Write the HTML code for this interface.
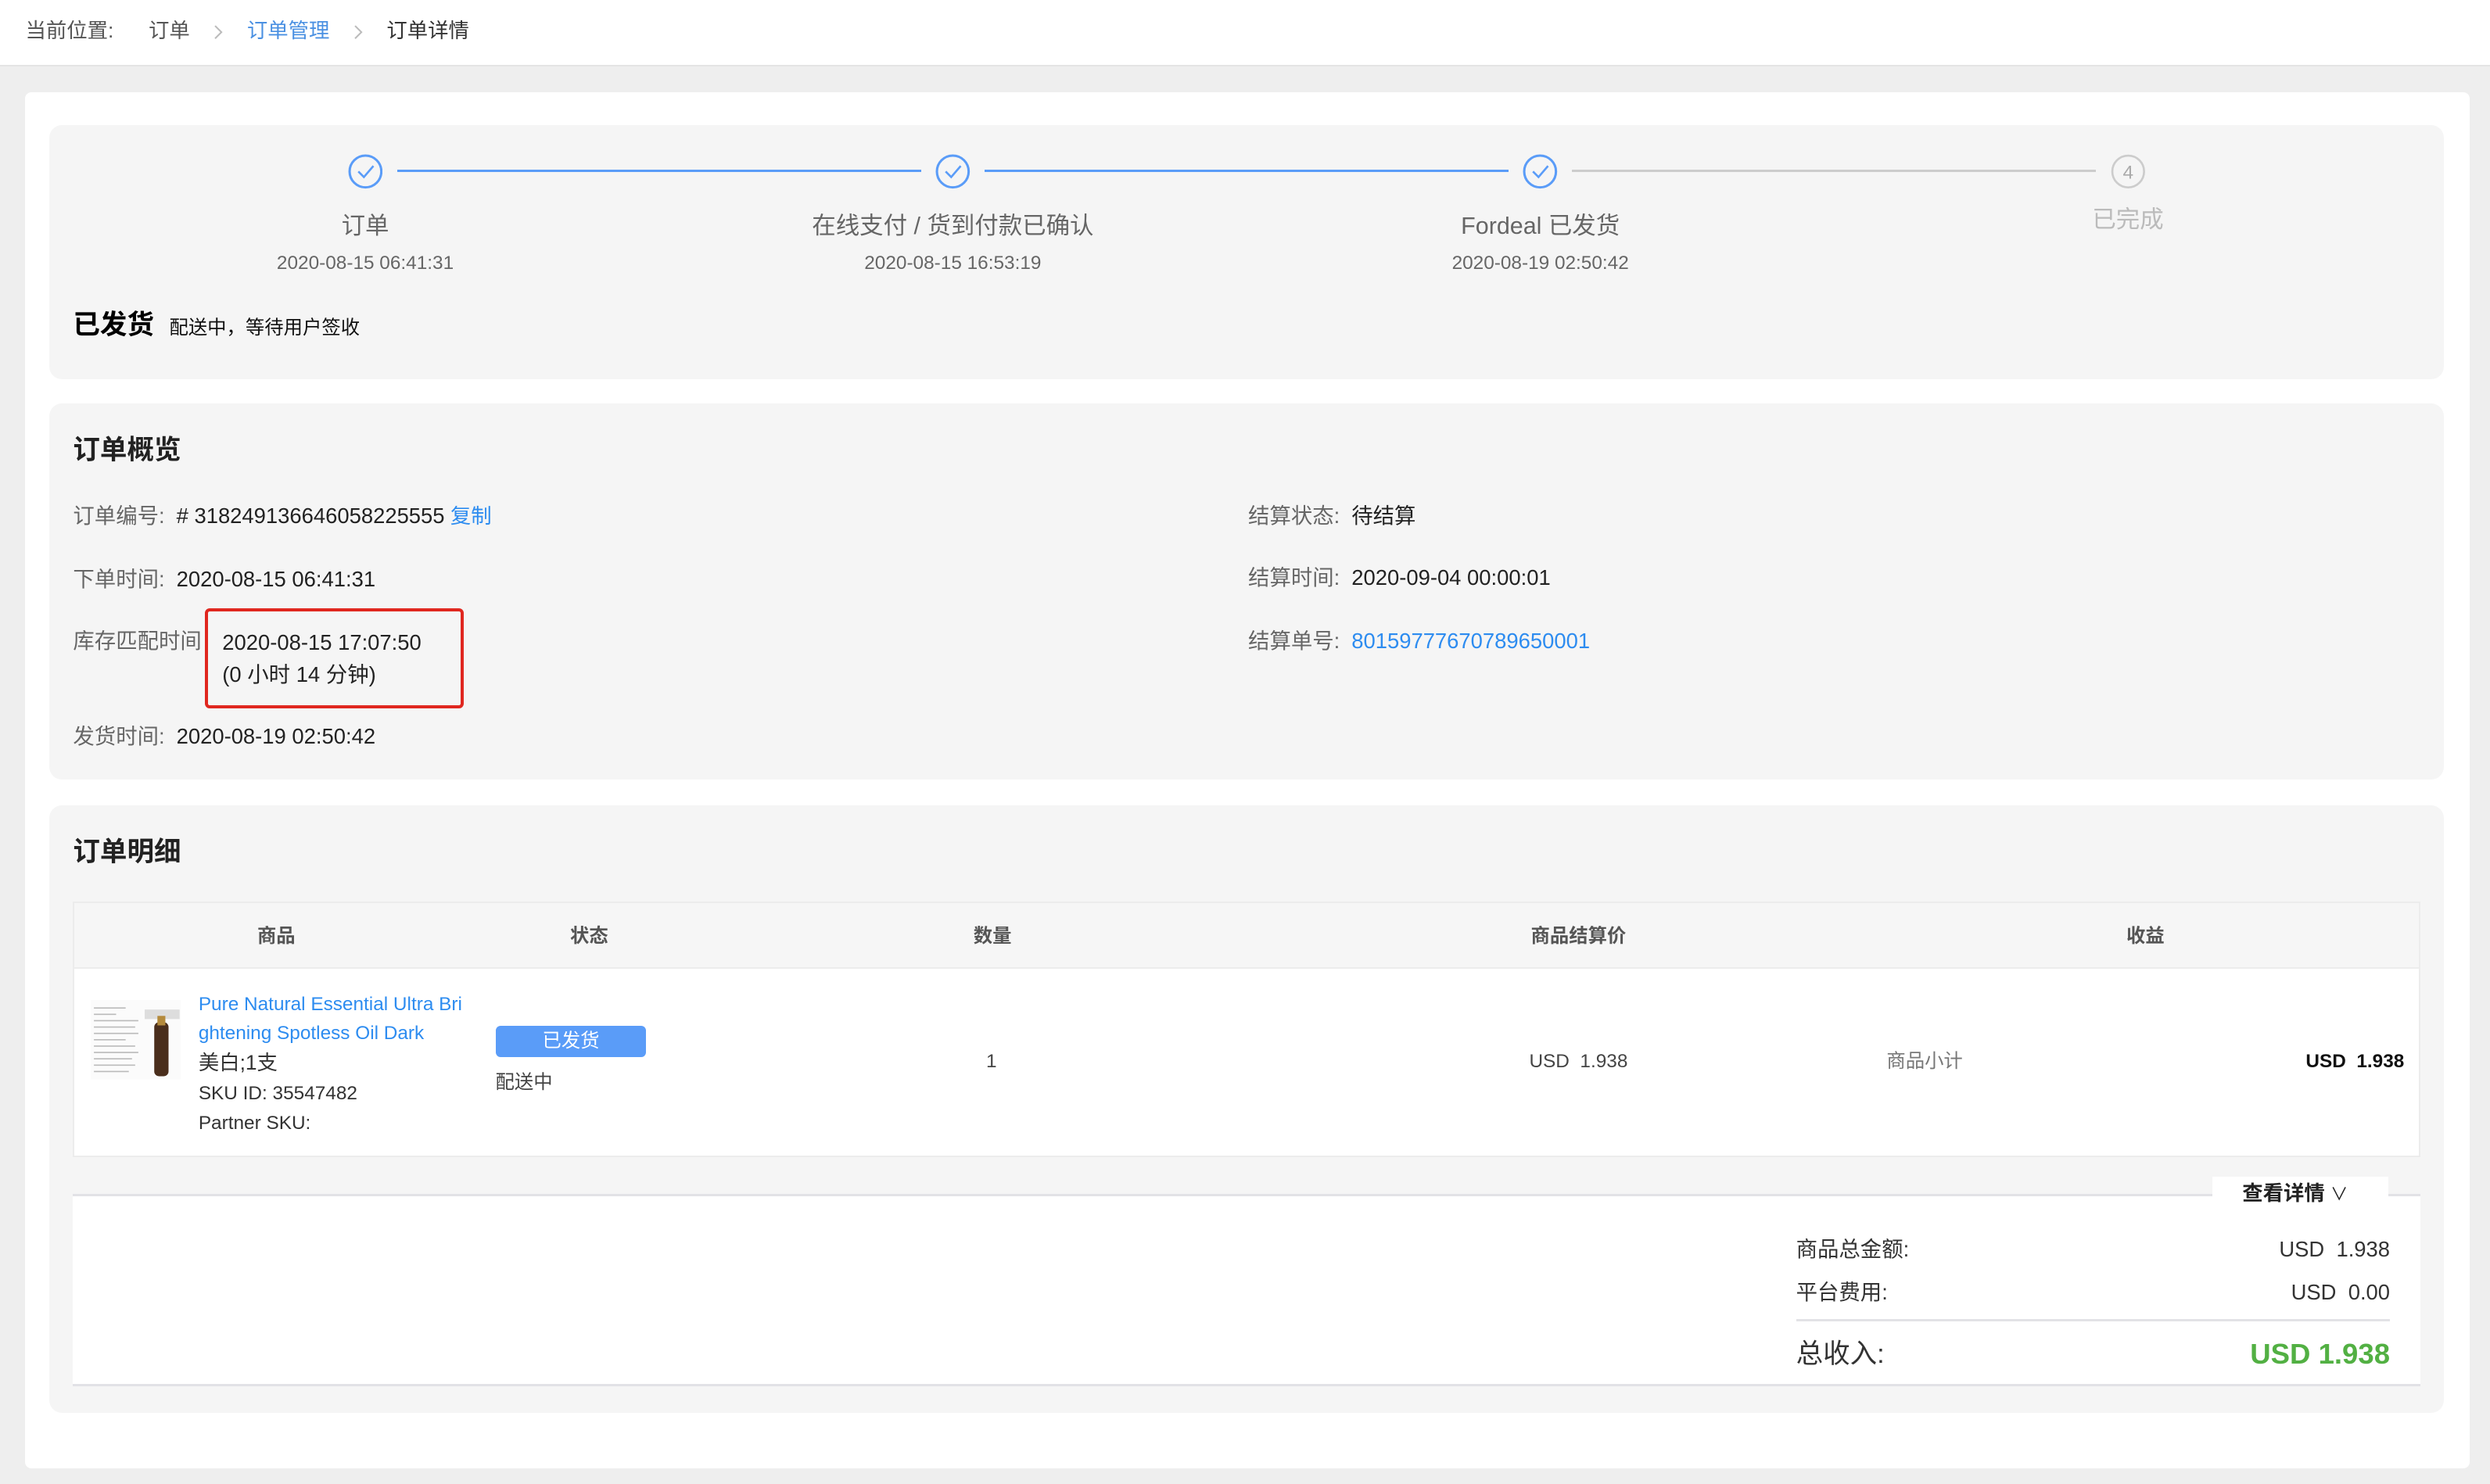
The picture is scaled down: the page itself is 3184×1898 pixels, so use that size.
<!DOCTYPE html>
<html><head><meta charset="utf-8"><style>
*{margin:0;padding:0;box-sizing:border-box}
html,body{width:3184px;height:1898px;overflow:hidden;background:#eeeeee}
#z{zoom:2.0306;width:1568px;height:935px;position:relative;font-family:"Liberation Sans","Noto Sans CJK SC",sans-serif;color:#333;font-size:13px;line-height:1.3}
.a{position:absolute;white-space:nowrap}
.hdr{left:0;top:0;width:1568px;height:42px;background:#fff;border-bottom:1px solid #e4e4e4}
.card{left:16px;top:58px;width:1539px;height:867px;background:#fff;border-radius:4px}
.p{background:#f5f5f5;border-radius:8px}
.ln{height:1.5px;background:#5a9cf8}
.lab{font-size:15px;color:#666;transform:translateX(-50%)}
.dt{font-size:12px;color:#666;transform:translateX(-50%)}
.t{font-size:17px;font-weight:bold;color:#222}
.k{color:#666;font-size:13.5px}
.v{color:#222;font-size:13.5px}
.th{font-size:12px;color:#555;font-weight:bold;transform:translateX(-50%)}
.sep{display:inline-block;margin:0 15px;vertical-align:middle}
</style></head><body><div id="z">
<div class="a hdr"></div>
<div class="a" style="left:16px;top:11px;font-size:13px;color:#555">当前位置:<span style="display:inline-block;width:22px"></span>订单<svg class="sep" width="6" height="10"><path d="M1 1l4 4-4 4" fill="none" stroke="#bbb" stroke-width="1"/></svg><span style="color:#4a90e2">订单管理</span><svg class="sep" width="6" height="10"><path d="M1 1l4 4-4 4" fill="none" stroke="#bbb" stroke-width="1"/></svg><span style="color:#333">订单详情</span></div>
<div class="a card"></div>
<div class="a p" style="left:31px;top:79px;width:1508px;height:160px"></div>
<div class="a ln" style="left:250px;top:107px;width:330px"></div>
<div class="a ln" style="left:620px;top:107px;width:330px"></div>
<div class="a ln" style="left:990px;top:107px;width:330px;background:#ccc"></div>
<svg class="a" style="left:219px;top:97px" width="22" height="22"><circle cx="11" cy="11" r="10" fill="none" stroke="#5a9cf8" stroke-width="1.5"/><path d="M6.5 11l3.5 3.5 6-7" fill="none" stroke="#5a9cf8" stroke-width="1.3"/></svg>
<svg class="a" style="left:589px;top:97px" width="22" height="22"><circle cx="11" cy="11" r="10" fill="none" stroke="#5a9cf8" stroke-width="1.5"/><path d="M6.5 11l3.5 3.5 6-7" fill="none" stroke="#5a9cf8" stroke-width="1.3"/></svg>
<svg class="a" style="left:959px;top:97px" width="22" height="22"><circle cx="11" cy="11" r="10" fill="none" stroke="#5a9cf8" stroke-width="1.5"/><path d="M6.5 11l3.5 3.5 6-7" fill="none" stroke="#5a9cf8" stroke-width="1.3"/></svg>
<svg class="a" style="left:1329px;top:97px" width="22" height="22"><circle cx="11" cy="11" r="10" fill="#f5f5f5" stroke="#ccc" stroke-width="1.3"/><text x="11" y="15.5" font-size="12" text-anchor="middle" fill="#aaa" font-family="Liberation Sans">4</text></svg>
<div class="a lab" style="left:230px;top:133px">订单</div>
<div class="a lab" style="left:600px;top:133px">在线支付 / 货到付款已确认</div>
<div class="a lab" style="left:970px;top:133px">Fordeal 已发货</div>
<div class="a lab" style="left:1340px;top:129px;color:#bbb">已完成</div>
<div class="a dt" style="left:230px;top:158px">2020-08-15 06:41:31</div>
<div class="a dt" style="left:600px;top:158px">2020-08-15 16:53:19</div>
<div class="a dt" style="left:970px;top:158px">2020-08-19 02:50:42</div>
<div class="a" style="left:46px;top:194px"><span class="t" style="color:#000">已发货</span> <span style="font-size:12px;color:#111;margin-left:6px">配送中，等待用户签收</span></div>

<div class="a p" style="left:31px;top:254px;width:1508px;height:237px"></div>
<div class="a t" style="left:46px;top:273px">订单概览</div>
<div class="a" style="left:46px;top:316px"><span class="k">订单编号:</span> <span class="v">&nbsp;# 318249136646058225555</span> <span style="color:#2d8cf0">复制</span></div>
<div class="a" style="left:46px;top:356px"><span class="k">下单时间:</span> <span class="v">&nbsp;2020-08-15 06:41:31</span></div>
<div class="a k" style="left:46px;top:395px">库存匹配时间</div>
<div class="a" style="left:129px;top:383px;width:163px;height:63px;border:2px solid #e0271f;border-radius:3px"></div>
<div class="a v" style="left:140px;top:395px;line-height:20px">2020-08-15 17:07:50<br>(0 小时 14 分钟)</div>
<div class="a" style="left:46px;top:455px"><span class="k">发货时间:</span> <span class="v">&nbsp;2020-08-19 02:50:42</span></div>
<div class="a" style="left:786px;top:316px"><span class="k">结算状态:</span> <span class="v">&nbsp;待结算</span></div>
<div class="a" style="left:786px;top:355px"><span class="k">结算时间:</span> <span class="v">&nbsp;2020-09-04 00:00:01</span></div>
<div class="a" style="left:786px;top:395px"><span class="k">结算单号:</span> <span style="color:#2d8cf0;font-size:13.5px">&nbsp;80159777670789650001</span></div>

<div class="a p" style="left:31px;top:507px;width:1508px;height:383px"></div>
<div class="a t" style="left:46px;top:526px">订单明细</div>
<div class="a" style="left:46px;top:568px;width:1478px;height:161px;border:1px solid #ececec;background:#fff"></div>
<div class="a" style="left:47px;top:569px;width:1476px;height:41px;background:#f6f6f6;border-bottom:1px solid #ececec"></div>
<div class="a th" style="left:174px;top:582px">商品</div>
<div class="a th" style="left:371px;top:582px">状态</div>
<div class="a th" style="left:625px;top:582px">数量</div>
<div class="a th" style="left:994px;top:582px">商品结算价</div>
<div class="a th" style="left:1351px;top:582px">收益</div>
<svg class="a" style="left:57px;top:630px" width="57" height="50"><rect width="57" height="50" fill="#fbfbfb"/><g stroke="#bbb" stroke-width="0.8"><path d="M2 5h20M2 9h14M2 13h28M2 17h26M2 21h28M2 25h20M2 29h26M2 33h28M2 37h24M2 41h26M2 45h22"/></g><rect x="34" y="6" width="22" height="6" fill="#ddd"/><rect x="40" y="14" width="9" height="34" rx="3" fill="#4a2e1c"/><rect x="42" y="10" width="5" height="6" fill="#b48a3c"/></svg>
<div class="a" style="left:125px;top:624px;font-size:12px;color:#2d8cf0;line-height:18px;white-space:normal;width:170px">Pure Natural Essential Ultra Bri ghtening Spotless Oil Dark</div>
<div class="a" style="left:125px;top:661px;font-size:13px;color:#333">美白;1支</div>
<div class="a" style="left:125px;top:681px;font-size:12px;color:#333">SKU ID: 35547482</div>
<div class="a" style="left:125px;top:700px;font-size:12px;color:#333">Partner SKU:</div>
<div class="a" style="left:312px;top:646px;width:95px;height:20px;background:#5a9cf8;border-radius:3px;color:#fff;font-size:12px;text-align:center;line-height:20px">已发货</div>
<div class="a" style="left:312px;top:674px;font-size:12px;color:#444">配送中</div>
<div class="a" style="left:621px;top:661px;font-size:12px;color:#444">1</div>
<div class="a" style="left:963px;top:661px;font-size:12px;color:#444">USD&nbsp; 1.938</div>
<div class="a" style="left:1188px;top:661px;font-size:12px;color:#777">商品小计</div>
<div class="a" style="right:54px;top:661px;font-size:12px;color:#111;font-weight:bold">USD&nbsp; 1.938</div>

<div class="a" style="left:46px;top:752px;width:1478px;height:121px;background:#fff;border-top:1.5px solid #e2e2e6;border-bottom:1.5px solid #e2e2e6"></div>
<div class="a" style="left:1393px;top:741px;width:111px;height:22px;background:#fff;font-size:13px;color:#222;font-weight:bold;padding:2px 0 0 19px">查看详情 <span style="font-weight:normal;font-size:11px">&#8744;</span></div>
<div class="a" style="left:1131px;top:778px;font-size:13.5px;color:#333">商品总金额:</div>
<div class="a" style="right:63px;top:778px;font-size:13.5px;color:#333">USD&nbsp; 1.938</div>
<div class="a" style="left:1131px;top:805px;font-size:13.5px;color:#333">平台费用:</div>
<div class="a" style="right:63px;top:805px;font-size:13.5px;color:#333">USD&nbsp; 0.00</div>
<div class="a" style="left:1131px;top:831px;width:374px;height:1.5px;background:#e2e2e6"></div>
<div class="a" style="left:1131px;top:842px;font-size:17px;color:#333">总收入:</div>
<div class="a" style="right:63px;top:841px;font-size:18px;color:#52b043;font-weight:bold">USD 1.938</div>
</div></body></html>
